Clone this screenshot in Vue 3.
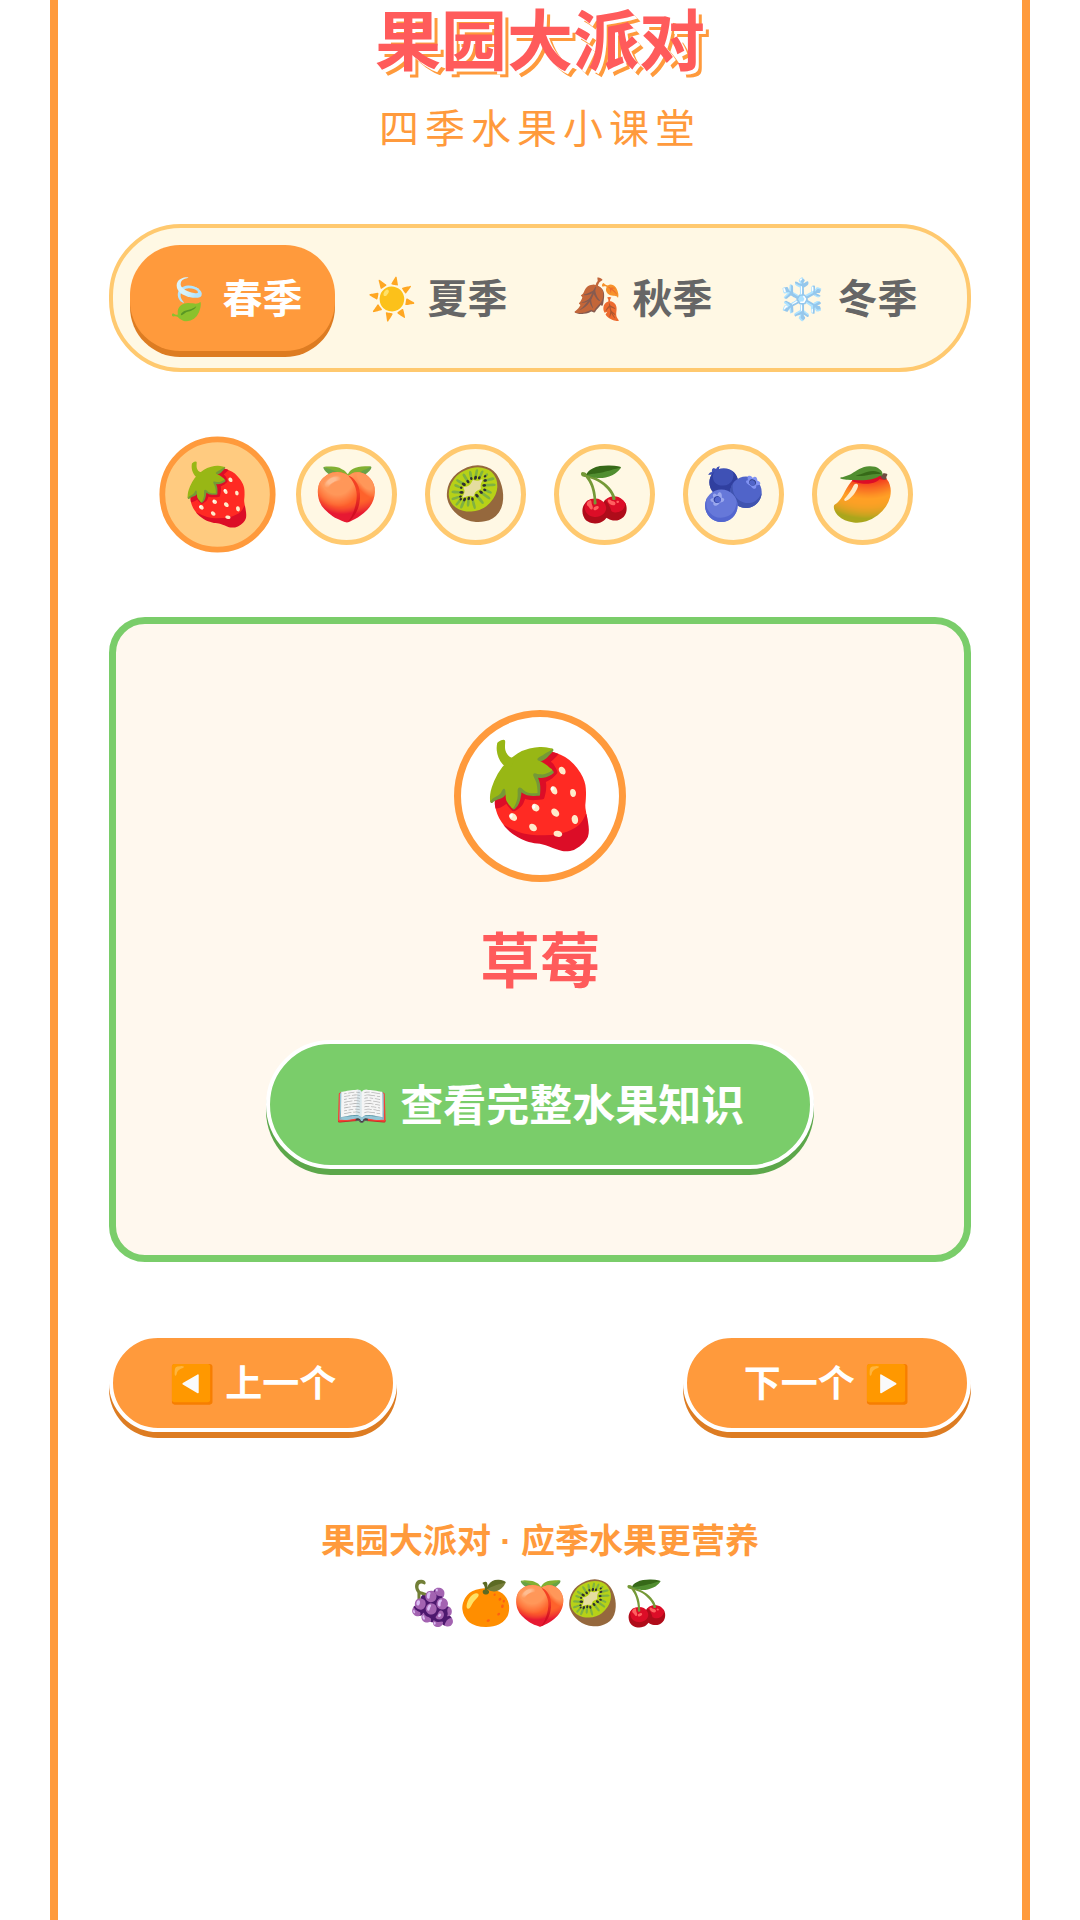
<script setup>
import { computed, ref } from 'vue';

const seasons = [
  {
    icon: '🍃',
    name: '春季',
    fruits: [
      { icon: '🍓', name: '草莓' },
      { icon: '🍑', name: '桃子' },
      { icon: '🥝', name: '猕猴桃' },
      { icon: '🍒', name: '樱桃' },
      { icon: '🫐', name: '蓝莓' },
      { icon: '🥭', name: '芒果' }
    ]
  },
  {
    icon: '☀️',
    name: '夏季',
    fruits: [
      { icon: '🍉', name: '西瓜' },
      { icon: '🍑', name: '桃子' },
      { icon: '🥭', name: '芒果' }
    ]
  },
  {
    icon: '🍂',
    name: '秋季',
    fruits: [
      { icon: '🍎', name: '苹果' },
      { icon: '🍇', name: '葡萄' },
      { icon: '🍐', name: '梨' }
    ]
  },
  {
    icon: '❄️',
    name: '冬季',
    fruits: [
      { icon: '🍊', name: '橘子' },
      { icon: '🍋', name: '柠檬' }
    ]
  }
];

const seasonIndex = ref(0);
const fruitIndex = ref(0);

const fruits = computed(() => seasons[seasonIndex.value].fruits);
const current = computed(() => fruits.value[fruitIndex.value]);

function selectSeason(i) {
  seasonIndex.value = i;
  fruitIndex.value = 0;
}

// 循环切换水果
function move(step) {
  const total = fruits.value.length;
  fruitIndex.value = (fruitIndex.value + step + total) % total;
}
</script>

<template>
  <main class="page">
    <header class="header">
      <h1>果园大派对</h1>
      <p>四季水果小课堂</p>
    </header>

    <!-- 季节切换 -->
    <nav class="seasons">
      <button
        v-for="(s, i) in seasons"
        :key="s.name"
        type="button"
        :class="['season', { active: i === seasonIndex }]"
        @click="selectSeason(i)"
      >{{ s.icon }} {{ s.name }}</button>
    </nav>

    <!-- 水果列表 -->
    <div class="fruits">
      <button
        v-for="(f, i) in fruits"
        :key="f.name"
        type="button"
        :class="['fruit', { active: i === fruitIndex }]"
        @click="fruitIndex = i"
      >{{ f.icon }}</button>
    </div>

    <section class="card">
      <div class="portrait">{{ current.icon }}</div>
      <h2>{{ current.name }}</h2>
      <button type="button" class="detail">📖 查看完整水果知识</button>
    </section>

    <div class="pager">
      <button type="button" @click="move(-1)">◀️ 上一个</button>
      <button type="button" @click="move(1)">下一个 ▶️</button>
    </div>

    <footer class="footer">
      <p>果园大派对 · 应季水果更营养</p>
      <p class="basket">🍇🍊🍑🥝🍒</p>
    </footer>
  </main>
</template>

<style>
body {
  background: #fff;
}
</style>

<style scoped>
.page {
  box-sizing: border-box;
  min-height: 100vh;
  margin: 0 50px;
  padding: 0 51px;
  border: solid #ff9a3c;
  border-width: 0 8px;
  font-family: "Noto Sans", "Noto Sans CJK SC", "Noto Color Emoji", sans-serif;
}

button {
  margin: 0;
  padding: 0;
  border: 0;
  font-family: inherit;
  font-weight: 700;
  line-height: 60px;
  color: #fff;
  cursor: pointer;
}

.header {
  text-align: center;
}

.header h1 {
  margin: 0;
  font-family: Roboto, "Noto Sans CJK SC", sans-serif;
  font-size: 66px;
  line-height: 86px;
  color: #ff5b5b;
  text-shadow: 3px 3px 0 #fff, 6px 6px 0 #ff9a3c;
}

.header p {
  margin: 12px 0 0;
  font-size: 40px;
  line-height: 60px;
  letter-spacing: 6px;
  color: #ff9a3c;
}

/* 季节标签 */
.seasons {
  display: flex;
  margin-top: 66px;
  padding: 17px;
  border: 4px solid #ffc96f;
  border-radius: 72px;
  background: #fff8e4;
}

.season {
  flex: 1;
  height: 106px;
  border-radius: 50px;
  background: transparent;
  font-size: 40px;
  color: #666;
}

.season.active {
  background: #ff9a3c;
  color: #fff;
  box-shadow: 0 6px 0 #dd7c22;
}

/* 水果圆形按钮 */
.fruits {
  display: flex;
  justify-content: center;
  gap: 28px;
  margin-top: 72px;
}

.fruit {
  display: flex;
  align-items: center;
  justify-content: center;
  width: 101px;
  height: 101px;
  border: 5px solid #ffc96f;
  border-radius: 50%;
  background: #fff8e4;
  font-family: Roboto, "Noto Color Emoji", sans-serif;
  font-size: 52px;
}

.fruit.active {
  border-color: #ff9a3c;
  background: #ffcb80;
  transform: scale(1.15);
}

/* 水果卡片 */
.card {
  display: flex;
  flex-direction: column;
  align-items: center;
  margin-top: 72px;
  padding: 86px 20px;
  border: 7px solid #7acd6a;
  border-radius: 36px;
  background: #fff8ee;
}

.portrait {
  display: flex;
  align-items: center;
  justify-content: center;
  box-sizing: border-box;
  width: 172px;
  height: 172px;
  border: 7px solid #ff9a3c;
  border-radius: 50%;
  background: #fff;
  font-family: Roboto, "Noto Color Emoji", sans-serif;
  font-size: 101px;
  line-height: 120px;
}

.card h2 {
  margin: 33px 0 35px;
  font-size: 60px;
  line-height: 90px;
  color: #ff5b5b;
}

.detail {
  height: 129px;
  padding: 0 66px;
  border: 4px solid #fff;
  border-radius: 65px;
  background: #7acd6a;
  font-size: 43px;
  box-shadow: 0 6px 0 #5ca74a;
}

/* 上一个 / 下一个 */
.pager {
  display: flex;
  justify-content: space-between;
  margin-top: 72px;
}

.pager button {
  width: 288px;
  height: 98px;
  border: 4px solid #fff;
  border-radius: 49px;
  background: #ff9a3c;
  font-size: 37px;
  box-shadow: 0 6px 0 #dd7c22;
}

.footer {
  margin-top: 78px;
  padding-bottom: 60px;
  text-align: center;
  font-family: "Liberation Sans", "Noto Sans CJK SC", "Noto Color Emoji", sans-serif;
  font-size: 34px;
  font-weight: 700;
  line-height: 62px;
  color: #ff9a3c;
}

.footer p {
  margin: 0;
}

.footer .basket {
  font-size: 43px;
}
</style>
